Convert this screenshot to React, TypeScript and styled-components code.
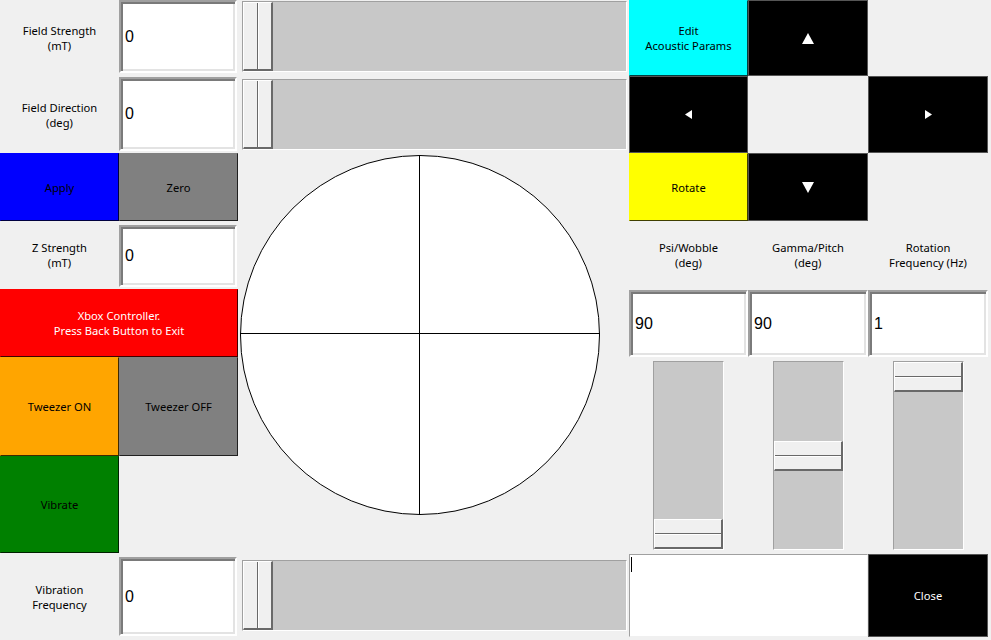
import React from "react";
import styled, { createGlobalStyle, css } from "styled-components";

const Global = createGlobalStyle`
  html, body { margin: 0; padding: 0; background: #f0f0f0; }
  body { font-family: "Noto Sans", "Liberation Sans", sans-serif; overflow: hidden; }
  * { box-sizing: border-box; }
`;

type Place = { $c: number; $r: number; $cs?: number; $rs?: number };

const place = css<Place>`
  grid-column: ${(p) => p.$c} / span ${(p) => p.$cs ?? 1};
  grid-row: ${(p) => p.$r} / span ${(p) => p.$rs ?? 1};
`;

const Window = styled.div`
  display: grid;
  grid-template-columns: 119px 119px 391px 119px 120px 120px 3px;
  grid-template-rows: 76px 77px 68px 68px 68px 99px 97px 87px;
  width: 991px;
  height: 640px;
  background: #f0f0f0;
`;

const Label = styled.div<Place>`
  ${place};
  display: flex;
  align-items: center;
  justify-content: center;
  text-align: center;
  font-size: 11.2px;
  line-height: 15px;
  color: #000;
`;

const EntryBox = styled.input<Place & { $m: string }>`
  ${place};
  margin: ${(p) => p.$m};
  min-width: 0;
  border-style: solid;
  border-width: 2px;
  border-color: #a0a0a0 #ffffff #ffffff #a0a0a0;
  box-shadow: inset 2px 2px 0 #7a7a7a, inset -2px -2px 0 #e3e3e3;
  background: #fff;
  font-family: "Liberation Sans", Arial, sans-serif;
  font-size: 16px;
  color: #000;
  padding: 0 0 0 4px;
  outline: none;
`;

const Button = styled.div<Place & { $bg: string; $fg?: string; $edge?: string }>`
  ${place};
  display: flex;
  align-items: center;
  justify-content: center;
  text-align: center;
  background: ${(p) => p.$bg};
  color: ${(p) => p.$fg ?? "#000"};
  font-size: 11.2px;
  line-height: 15px;
  border: 1px solid;
  border-color: ${(p) =>
    p.$edge
      ? p.$edge
      : "transparent rgba(0,0,0,0.75) rgba(0,0,0,0.75) transparent"};
`;

const HTrough = styled.div<Place & { $m: string }>`
  ${place};
  margin: ${(p) => p.$m};
  display: flex;
  background: #c8c8c8;
  border: 1px solid;
  border-color: #a0a0a0 #ffffff #ffffff #a0a0a0;
`;

const HThumb = styled.div<{ $offset: number }>`
  margin-left: ${(p) => p.$offset}px;
  width: 30px;
  flex: none;
  display: flex;
  background: #f0f0f0;
  border-style: solid;
  border-width: 1px 2px 2px 1px;
  border-color: #ffffff #696969 #696969 #ffffff;
`;

const HThumbHalf = styled.div`
  flex: 1;
  & + & {
    border-left: 1px solid #696969;
    box-shadow: inset 1px 0 0 #ffffff;
  }
`;

const VSlot = styled.div<Place>`
  ${place};
  display: flex;
  justify-content: center;
  padding: 4px 0 3px;
`;

const VTrough = styled.div`
  width: 71px;
  display: flex;
  flex-direction: column;
  background: #c8c8c8;
  border: 1px solid;
  border-color: #a0a0a0 #ffffff #ffffff #a0a0a0;
`;

const VThumb = styled.div<{ $offset: number }>`
  margin-top: ${(p) => p.$offset}px;
  height: 30px;
  flex: none;
  display: flex;
  flex-direction: column;
  background: #f0f0f0;
  border-style: solid;
  border-width: 1px 2px 2px 1px;
  border-color: #ffffff #696969 #696969 #ffffff;
`;

const VThumbHalf = styled.div`
  flex: 1;
  & + & {
    border-top: 1px solid #696969;
    box-shadow: inset 0 1px 0 #ffffff;
  }
`;

const CanvasArea = styled.div<Place>`
  ${place};
  display: flex;
`;

const Arrow = styled.svg`
  display: block;
`;

const TextArea = styled.div<Place>`
  ${place};
  margin: 1px 0 3px 0;
  background: #fff;
  border: 1px solid;
  border-color: #a0a0a0 #f0f0f0 #f0f0f0 #a0a0a0;
  padding: 2px 0 0 1px;
`;

const Caret = styled.div`
  width: 1px;
  height: 15px;
  background: #000;
`;

const HScale = ({ c, r, m }: { c: number; r: number; m: string }) => (
  <HTrough $c={c} $r={r} $m={m}>
    <HThumb $offset={0}>
      <HThumbHalf />
      <HThumbHalf />
    </HThumb>
  </HTrough>
);

const VScale = ({ c, offset }: { c: number; offset: number }) => (
  <VSlot $c={c} $r={6} $rs={2}>
    <VTrough>
      <VThumb $offset={offset}>
        <VThumbHalf />
        <VThumbHalf />
      </VThumb>
    </VTrough>
  </VSlot>
);

const Tri = ({ dir, w, h }: { dir: "up" | "down" | "left" | "right"; w: number; h: number }) => {
  const pts =
    dir === "up"
      ? `${w / 2},0 ${w},${h} 0,${h}`
      : dir === "down"
      ? `0,0 ${w},0 ${w / 2},${h}`
      : dir === "left"
      ? `0,${h / 2} ${w},0 ${w},${h}`
      : `0,0 ${w},${h / 2} 0,${h}`;
  return (
    <Arrow width={w} height={h} viewBox={`0 0 ${w} ${h}`}>
      <polygon points={pts} fill="#fff" />
    </Arrow>
  );
};

const BLACK_EDGE = "#555555";

export default function App() {
  return (
    <>
      <Global />
      <Window>
        {/* Row 1 */}
        <Label $c={1} $r={1}>
          Field Strength
          <br />
          (mT)
        </Label>
        <EntryBox $c={2} $r={1} $m="0 1px 3px 0" readOnly defaultValue="0" />
        <HScale c={3} r={1} m="1px 2px 4px 4px" />
        <Button $c={4} $r={1} $bg="#00ffff">
          Edit
          <br />
          Acoustic Params
        </Button>
        <Button $c={5} $r={1} $bg="#000" $edge={BLACK_EDGE}>
          <Tri dir="up" w={12} h={11} />
        </Button>

        {/* Row 2 */}
        <Label $c={1} $r={2}>
          Field Direction
          <br />
          (deg)
        </Label>
        <EntryBox $c={2} $r={2} $m="1px 1px 2px 0" readOnly defaultValue="0" />
        <HScale c={3} r={2} m="3px 2px 3px 4px" />
        <Button $c={4} $r={2} $bg="#000" $edge={BLACK_EDGE}>
          <Tri dir="left" w={7} h={9} />
        </Button>
        <Button $c={6} $r={2} $bg="#000" $edge={BLACK_EDGE}>
          <Tri dir="right" w={7} h={9} />
        </Button>

        {/* Row 3 */}
        <Button $c={1} $r={3} $bg="#0000ff">
          Apply
        </Button>
        <Button $c={2} $r={3} $bg="#808080">
          Zero
        </Button>
        <CanvasArea $c={3} $r={3} $rs={5}>
          <svg width="391" height="400" viewBox="0 0 391 400">
            <circle cx="182" cy="182" r="179.5" fill="#fff" stroke="#000" strokeWidth="1" />
            <line x1="181.5" y1="2" x2="181.5" y2="362" stroke="#000" strokeWidth="1" />
            <line x1="2" y1="180.5" x2="362" y2="180.5" stroke="#000" strokeWidth="1" />
          </svg>
        </CanvasArea>
        <Button $c={4} $r={3} $bg="#ffff00">
          Rotate
        </Button>
        <Button $c={5} $r={3} $bg="#000" $edge={BLACK_EDGE}>
          <Tri dir="down" w={12} h={11} />
        </Button>

        {/* Row 4 */}
        <Label $c={1} $r={4}>
          Z Strength
          <br />
          (mT)
        </Label>
        <EntryBox $c={2} $r={4} $m="4px 1px 2px 0" readOnly defaultValue="0" />
        <Label $c={4} $r={4}>
          Psi/Wobble
          <br />
          (deg)
        </Label>
        <Label $c={5} $r={4}>
          Gamma/Pitch
          <br />
          (deg)
        </Label>
        <Label $c={6} $r={4}>
          Rotation
          <br />
          Frequency (Hz)
        </Label>

        {/* Row 5 */}
        <Button $c={1} $r={5} $cs={2} $bg="#ff0000" $fg="#fff">
          Xbox Controller.
          <br />
          Press Back Button to Exit
        </Button>
        <EntryBox $c={4} $r={5} $m="1px 0 0 0" readOnly defaultValue="90" />
        <EntryBox $c={5} $r={5} $m="1px 0 0 0" readOnly defaultValue="90" />
        <EntryBox $c={6} $r={5} $m="1px 0 0 0" readOnly defaultValue="1" />

        {/* Rows 6-7 */}
        <Button $c={1} $r={6} $bg="#ffa500">
          Tweezer ON
        </Button>
        <Button $c={2} $r={6} $bg="#808080">
          Tweezer OFF
        </Button>
        <VScale c={4} offset={157} />
        <VScale c={5} offset={79} />
        <VScale c={6} offset={0} />
        <Button $c={1} $r={7} $bg="#008000">
          Vibrate
        </Button>

        {/* Row 8 */}
        <Label $c={1} $r={8}>
          Vibration
          <br />
          Frequency
        </Label>
        <EntryBox $c={2} $r={8} $m="4px 1px 4px 0" readOnly defaultValue="0" />
        <HScale c={3} r={8} m="7px 2px 9px 4px" />
        <TextArea $c={4} $r={8} $cs={2}>
          <Caret />
        </TextArea>
        <Button $c={6} $r={8} $bg="#000" $fg="#fff" $edge={BLACK_EDGE} style={{ marginTop: 1, marginBottom: 3 }}>
          Close
        </Button>
      </Window>
    </>
  );
}
